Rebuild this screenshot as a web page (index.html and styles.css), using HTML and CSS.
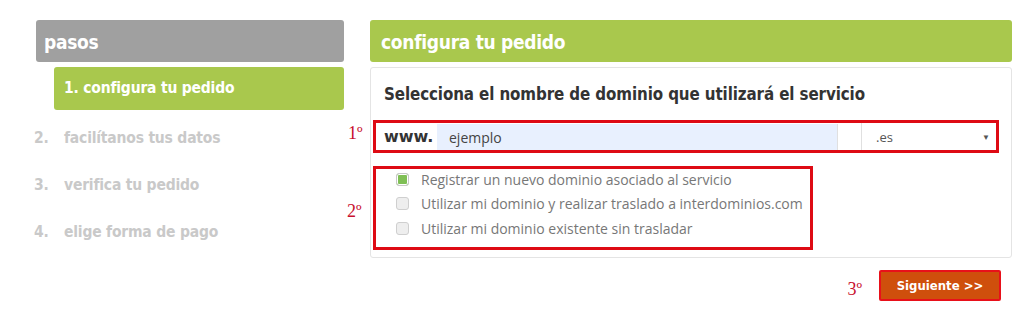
FILE: index.html
```html
<!DOCTYPE html>
<html lang="es">
<head>
    <meta charset="UTF-8">
    <meta name="viewport" content="width=device-width, initial-scale=1.0">
    <title>Configura tu pedido</title>
    <link rel="stylesheet" href="styles.css">
</head>
<body>
    <div class="page">
        <!-- Pasos -->
        <aside class="steps">
            <h2 class="steps-title">pasos</h2>
            <div class="step active">1. configura tu pedido</div>
            <div class="step"><span class="num">2.</span>facilítanos tus datos</div>
            <div class="step"><span class="num">3.</span>verifica tu pedido</div>
            <div class="step"><span class="num">4.</span>elige forma de pago</div>
        </aside>

        <main class="order">
            <h2 class="order-title">configura tu pedido</h2>
            <div class="panel">
                <h3 class="panel-title">Selecciona el nombre de dominio que utilizará el servicio</h3>

                <div class="mark domain-row">
                    <span class="note note-1">1º</span>
                    <span class="www">www.</span>
                    <input class="domain-input" type="text" value="ejemplo">
                    <span class="addon"></span>
                    <div class="tld">.es<span class="arrow">▼</span></div>
                </div>

                <div class="mark options">
                    <span class="note note-2">2º</span>
                    <label class="option"><span class="check checked"></span>Registrar un nuevo dominio asociado al servicio</label>
                    <label class="option"><span class="check"></span>Utilizar mi dominio y realizar traslado a interdominios.com</label>
                    <label class="option"><span class="check"></span>Utilizar mi dominio existente sin trasladar</label>
                </div>
            </div>

            <div class="actions">
                <span class="note note-3">3º</span>
                <button class="next">Siguiente &gt;&gt;</button>
            </div>
        </main>
    </div>
</body>
</html>
```

FILE: styles.css
```css
body {
    margin: 0;
    background-color: #fff;
    font-family: "Open Sans", sans-serif;
}

.page {
    display: flex;
    gap: 26px;
    padding: 20px 12px 0 36px;
}

/* Pasos */
.steps {
    width: 308px;
    flex-shrink: 0;
}

.steps-title,
.order-title {
    margin: 0;
    height: 42px;
    line-height: 44px;
    padding-left: 8px;
    border-radius: 3px;
    color: #fff;
    font-family: "DejaVu Sans Condensed", "DejaVu Sans", sans-serif;
    font-stretch: condensed;
    font-weight: bold;
    font-size: 19px;
    letter-spacing: -0.3px;
}

.steps-title {
    background-color: #a0a0a0;
}

.step {
    display: flex;
    font-family: "DejaVu Sans Condensed", "DejaVu Sans", sans-serif;
    font-stretch: condensed;
    font-weight: bold;
    font-size: 15.5px;
    letter-spacing: -0.2px;
    color: #c9c9c9;
    height: 47px;
    line-height: 47px;
    margin-left: -2px;
}

.step .num {
    width: 30px;
}

.step.active {
    margin: 5px 0 5px 18px;
    height: 43px;
    line-height: 43px;
    padding-left: 10px;
    border-radius: 3px;
    background-color: #a9c84d;
    color: #fff;
}

/* Pedido */
.order {
    width: 642px;
}

.order-title {
    background-color: #a9c84d;
    padding-left: 11px;
}

.panel {
    margin-top: 5px;
    border: 1px solid #e4e4e4;
    border-radius: 3px;
    padding: 0 12px 7px 2px;
}

.panel-title {
    margin: 0;
    padding: 12px 0 0 11px;
    height: 40px;
    line-height: 28px;
    font-family: "DejaVu Sans Condensed", "DejaVu Sans", sans-serif;
    font-stretch: condensed;
    font-weight: bold;
    font-size: 16.8px;
    letter-spacing: -0.1px;
    color: #333;
}

.mark {
    position: relative;
    border: 3px solid #de0a14;
}

.note {
    position: absolute;
    font-family: "Liberation Serif", serif;
    font-size: 18px;
    color: #c8102e;
}

.note-1 {
    left: -28px;
    top: 0;
}

.note-2 {
    left: -29px;
    top: 32px;
}

.note-3 {
    left: -32px;
    top: 9px;
}

.domain-row {
    display: flex;
    align-items: stretch;
    height: 27px;
}

.www {
    width: 61px;
    padding-left: 8px;
    box-sizing: border-box;
    line-height: 27px;
    font-family: "DejaVu Sans", sans-serif;
    font-weight: bold;
    font-size: 16px;
    color: #333;
}

.domain-input {
    box-sizing: border-box;
    width: 401px;
    margin: 1px 0 0;
    padding: 0 12px;
    border: none;
    border-right: 1px solid #e0e0e0;
    background-color: #e8f0fe;
    font-family: "Open Sans", sans-serif;
    font-size: 14px;
    color: #444;
    outline: none;
}

.addon {
    width: 23px;
    background-color: #fff;
}

.tld {
    display: flex;
    justify-content: space-between;
    align-items: center;
    flex: 1;
    margin-right: 2px;
    padding: 0 4px 0 14px;
    border-left: 1px solid #e0e0e0;
    font-size: 13px;
    color: #555;
}

.arrow {
    font-size: 8px;
    color: #555;
}

.options {
    width: 440px;
    margin-top: 13px;
    padding: 0 0 0 20px;
    box-sizing: border-box;
    height: 84px;
}

.option {
    display: flex;
    align-items: center;
    height: 24.5px;
    font-size: 14px;
    color: #777;
}

.option:first-of-type {
    margin-top: -2px;
}

.check {
    width: 11px;
    height: 11px;
    margin-right: 12px;
    border: 1px solid #cfcfcf;
    border-radius: 3px;
    background-color: #eee;
}

.check.checked {
    background-color: #7fbf55;
    border-color: #c8c8c8;
    box-shadow: inset 0 0 0 1px #fff;
}

.actions {
    position: relative;
    display: flex;
    justify-content: flex-end;
    margin-top: 12px;
    padding-right: 11px;
}

.next {
    position: relative;
    width: 122px;
    height: 31px;
    background-color: #cf4f0c;
    border: 2px solid #e8101a;
    border-radius: 2px;
    color: #fff;
    font-family: "DejaVu Sans Condensed", "DejaVu Sans", sans-serif;
    font-stretch: condensed;
    font-weight: bold;
    font-size: 13px;
    cursor: pointer;
}

.actions .note-3 {
    left: auto;
    right: 150px;
}
```
